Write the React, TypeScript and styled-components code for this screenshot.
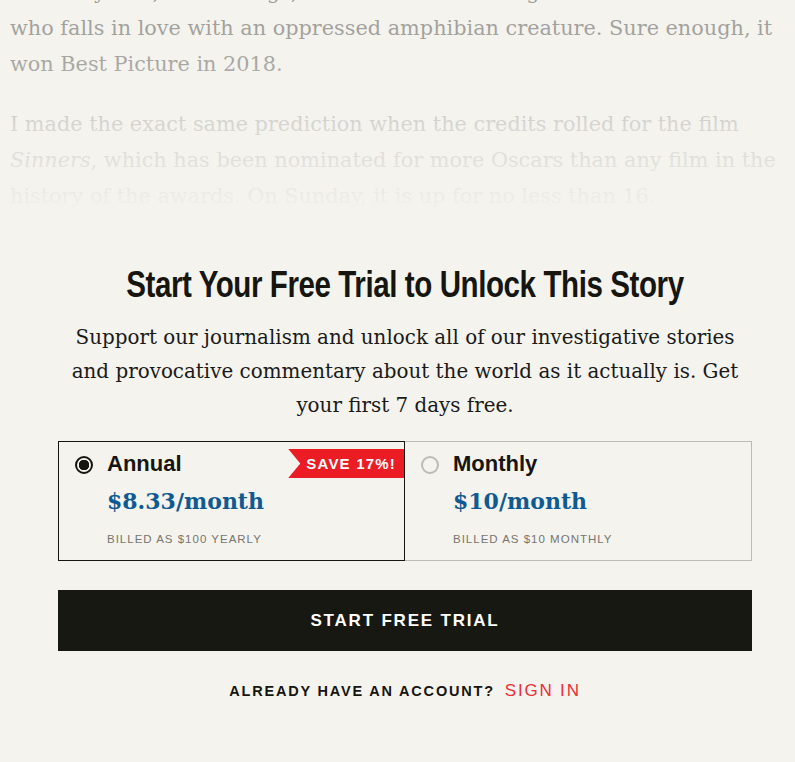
import React from "react";
import { styled, createGlobalStyle } from "styled-components";

const GlobalStyle = createGlobalStyle`
  html, body {
    margin: 0;
    padding: 0;
    background: #f4f3ee;
  }
  body {
    overflow: hidden;
  }
`;

const plans = [
  { id: "annual", name: "Annual", price: "$8.33/month", billed: "BILLED AS $100 YEARLY", selected: true, badge: "SAVE 17%!" },
  { id: "monthly", name: "Monthly", price: "$10/month", billed: "BILLED AS $10 MONTHLY", selected: false },
];

const App: React.FC = () => {
  return (
    <>
      <GlobalStyle />
      <Page>
        <Article>
          <Para>
            a fantasy film, of all things, about a mute cleaning woman
            <br />
            who falls in love with an oppressed amphibian creature. Sure enough, it
            <br />
            won Best Picture in 2018.
          </Para>
          <Para>
            I made the exact same prediction when the credits rolled for the film{" "}
            <em>Sinners</em>, which has been nominated for more Oscars than any film in the
            history of the awards. On Sunday, it is up for no less than 16.
          </Para>
          <Para>
            The movie, which was written and directed by Ryan Coogler, is a vampire story set in
            the Mississippi Delta.
          </Para>
          <Fade />
        </Article>

        <Paywall>
          <Heading>Start Your Free Trial to Unlock This Story</Heading>
          <Intro>
            Support our journalism and unlock all of our investigative stories and provocative
            commentary about the world as it actually is. Get your first 7 days free.
          </Intro>

          <Plans>
            {plans.map((plan) => (
              <PlanCard key={plan.id} $selected={plan.selected}>
                <Radio $selected={plan.selected} />
                <PlanBody>
                  <PlanName>{plan.name}</PlanName>
                  <Price>{plan.price}</Price>
                  <Billed>{plan.billed}</Billed>
                </PlanBody>
                {plan.badge && <Badge>{plan.badge}</Badge>}
              </PlanCard>
            ))}
          </Plans>

          <TrialButton>START FREE TRIAL</TrialButton>

          <SignInRow>
            ALREADY HAVE AN ACCOUNT?<SignIn>SIGN IN</SignIn>
          </SignInRow>
        </Paywall>
      </Page>
    </>
  );
};

const Page = styled.div`
  height: 762px;
  overflow: hidden;
  padding-left: 10px;
`;

const Article = styled.div`
  position: relative;
  width: 775px;
  margin-top: -26px;
  height: 250px;
  overflow: hidden;
`;

const Para = styled.p`
  margin: 0 0 24px;
  font-family: "DejaVu Serif", serif;
  font-size: 20.8px;
  line-height: 36px;
  white-space: normal;
  color: #2b2a28;
`;

const Fade = styled.div`
  position: absolute;
  inset: 0;
  background: linear-gradient(
    to bottom,
    rgba(244, 243, 238, 0.55) 0px,
    rgba(244, 243, 238, 0.62) 90px,
    rgba(244, 243, 238, 0.85) 150px,
    rgba(244, 243, 238, 0.95) 215px,
    rgba(244, 243, 238, 1) 240px
  );
`;

const Paywall = styled.div`
  width: 694px;
  margin-left: 48px;
  display: flex;
  flex-direction: column;
  align-items: center;
`;

const Heading = styled.h2`
  margin: 39px 0 0;
  font-family: "Liberation Sans", sans-serif;
  font-weight: 700;
  font-size: 36px;
  line-height: 44px;
  letter-spacing: -0.5px;
  white-space: nowrap;
  transform: scaleX(0.82);
  color: #16150f;
`;

const Intro = styled.p`
  margin: 14px 0 0;
  width: 680px;
  text-align: center;
  font-family: "DejaVu Serif", serif;
  font-size: 19.9px;
  line-height: 34px;
  color: #1a1a18;
`;

const Plans = styled.div`
  margin-top: 18px;
  width: 100%;
  display: grid;
  grid-template-columns: 1fr 1fr;
`;

const PlanCard = styled.div<{ $selected: boolean }>`
  position: relative;
  display: flex;
  gap: 14px;
  height: 120px;
  box-sizing: border-box;
  padding: 7px 16px;
  border: 1px solid ${(p) => (p.$selected ? "#16150f" : "#bdbbb5")};
  ${(p) => (p.$selected ? "z-index: 1;" : "margin-left: -1px;")}
`;

const Radio = styled.span<{ $selected: boolean }>`
  flex: none;
  margin-top: 7px;
  width: 18px;
  height: 18px;
  box-sizing: border-box;
  border-radius: 50%;
  border: 2px solid ${(p) => (p.$selected ? "#16150f" : "#bdbbb5")};
  background: ${(p) => (p.$selected ? "radial-gradient(circle, #16150f 0 5px, transparent 5.5px)" : "transparent")};
`;

const PlanBody = styled.div`
  display: flex;
  flex-direction: column;
`;

const PlanName = styled.div`
  font-family: "Liberation Sans", sans-serif;
  font-weight: 700;
  font-size: 22px;
  line-height: 30px;
  color: #16150f;
`;

const Price = styled.div`
  margin-top: 6px;
  font-family: "DejaVu Serif", serif;
  font-weight: 700;
  font-size: 22px;
  line-height: 32px;
  color: #0f5a92;
`;

const Billed = styled.div`
  margin-top: 16px;
  font-family: "Liberation Sans", sans-serif;
  font-size: 11.5px;
  letter-spacing: 1px;
  color: #777570;
`;

const Badge = styled.div`
  position: absolute;
  top: 7px;
  right: 0;
  height: 29px;
  padding: 0 8px 0 18px;
  display: flex;
  align-items: center;
  background: #ec1c24;
  clip-path: polygon(0 0, 100% 0, 100% 100%, 0 100%, 12px 50%);
  font-family: "Liberation Sans", sans-serif;
  font-weight: 700;
  font-size: 15px;
  letter-spacing: 1.2px;
  color: #fff;
`;

const TrialButton = styled.button`
  margin-top: 29px;
  width: 100%;
  height: 61px;
  border: none;
  background: #181813;
  color: #fff;
  font-family: "Liberation Sans", sans-serif;
  font-weight: 700;
  font-size: 17px;
  letter-spacing: 1.8px;
  cursor: pointer;
`;

const SignInRow = styled.div`
  margin-top: 30px;
  display: flex;
  align-items: baseline;
  gap: 10px;
  font-family: "Liberation Sans", sans-serif;
  font-weight: 700;
  font-size: 14.5px;
  letter-spacing: 1.8px;
  color: #16150f;
`;

const SignIn = styled.a`
  font-size: 17px;
  font-weight: 400;
  letter-spacing: 1.8px;
  color: #ee2d37;
  cursor: pointer;
`;

export default App;
